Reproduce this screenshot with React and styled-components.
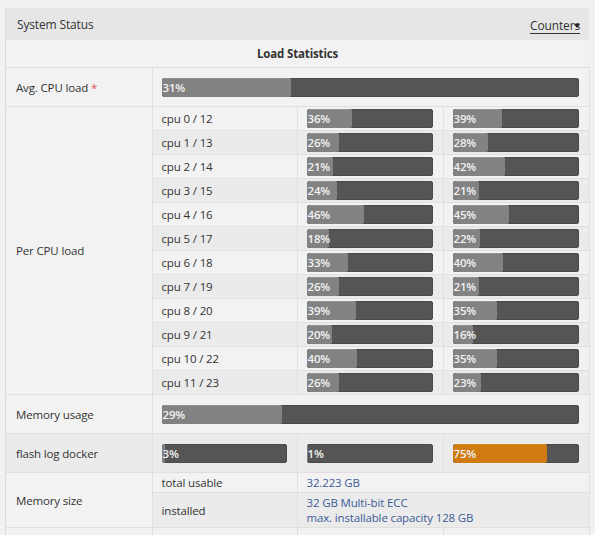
import styled, { createGlobalStyle } from 'styled-components'

const Global = createGlobalStyle`
    body {
        margin: 0;
        padding: 8px 6px 8px 5px;
        background: #f1f1f1;
        font-family: "Open Sans", "Liberation Sans", sans-serif;
        font-size: 11.5px;
        letter-spacing: -0.15px;
        color: #333;
    }
`

const perCpu = [
    ['cpu 0 / 12', 36, 39],
    ['cpu 1 / 13', 26, 28],
    ['cpu 2 / 14', 21, 42],
    ['cpu 3 / 15', 24, 21],
    ['cpu 4 / 16', 46, 45],
    ['cpu 5 / 17', 18, 22],
    ['cpu 6 / 18', 33, 40],
    ['cpu 7 / 19', 26, 21],
    ['cpu 8 / 20', 39, 35],
    ['cpu 9 / 21', 20, 16],
    ['cpu 10 / 22', 40, 35],
    ['cpu 11 / 23', 26, 23],
]

const Progress = ({ value, warn }) => (
    <Bar>
        <Fill $warn={warn} style={{ width: `${value}%` }} />
        <BarText>{value}%</BarText>
    </Bar>
)

const App = () => {
    return (
        <>
            <Global />
            <Panel>
                <Header>
                    <Title>System Status</Title>
                    <Counters>
                        Counters
                        <Caret />
                    </Counters>
                </Header>
                <Table>
                    <colgroup>
                        <col style={{ width: 146 }} />
                        <col style={{ width: 145 }} />
                        <col style={{ width: 146 }} />
                        <col style={{ width: 146 }} />
                    </colgroup>
                    <tbody>
                        <Row>
                            <Caption colSpan={4}>Load Statistics</Caption>
                        </Row>
                        <Row>
                            <Label $h={38}>Avg. CPU load <Star>*</Star></Label>
                            <Cell colSpan={3}><Progress value={31} /></Cell>
                        </Row>
                        {perCpu.map(([name, a, b], i) => (
                            <Row key={name} $alt={i % 2 === 1}>
                                {i === 0 && <Label $light rowSpan={12}>Per CPU load</Label>}
                                <Cell $h={23}>{name}</Cell>
                                <Cell><Progress value={a} /></Cell>
                                <Cell><Progress value={b} /></Cell>
                            </Row>
                        ))}
                        <Row>
                            <Label $h={38}>Memory usage</Label>
                            <Cell colSpan={3}><Progress value={29} /></Cell>
                        </Row>
                        <Row $alt>
                            <Label $h={38}>flash log docker</Label>
                            <Cell><Progress value={3} /></Cell>
                            <Cell><Progress value={1} /></Cell>
                            <Cell><Progress value={75} warn /></Cell>
                        </Row>
                        <Row>
                            <Label $light rowSpan={2}>Memory size</Label>
                            <Cell $h={19}>total usable</Cell>
                            <Cell colSpan={2}><Value>32.223 GB</Value></Cell>
                        </Row>
                        <Row $alt>
                            <Cell $h={34}>installed</Cell>
                            <Cell colSpan={2}>
                                <Value>32 GB Multi-bit ECC</Value>
                                <Value>max. installable capacity 128 GB</Value>
                            </Cell>
                        </Row>
                        <Row>
                            <Label $light rowSpan={2}></Label>
                            <Cell $h={20}>Data from</Cell>
                            <Cell><Value>Standard</Value></Cell>
                            <Cell><Value>Extended</Value></Cell>
                        </Row>
                    </tbody>
                </Table>
            </Panel>
        </>
    )
}

const Panel = styled.div`
    border-left: 1px solid #dcdcdc;
    width: 583px;
`
const Header = styled.div`
    display: flex;
    align-items: center;
    justify-content: space-between;
    height: 32px;
    padding: 0 9px 0 11px;
    background: #e6e6e6;
`
const Title = styled.span`
    font-size: 12px;
    color: #333;
`
const Counters = styled.a`
    position: relative;
    color: #333;
    font-size: 12px;
    padding-top: 2px;
    text-decoration: underline;
    text-underline-offset: 3px;
    cursor: pointer;
`
const Caret = styled.span`
    position: absolute;
    right: 0;
    top: 9px;
    width: 0;
    height: 0;
    border-left: 3px solid transparent;
    border-right: 3px solid transparent;
    border-top: 4px solid #222;
`
const Table = styled.table`
    width: 583px;
    table-layout: fixed;
    border-collapse: collapse;
`
const Row = styled.tr`
    background: ${p => (p.$alt ? '#ebebeb' : '#f2f2f2')};
`
const Caption = styled.td`
    height: 27px;
    padding: 0;
    text-align: center;
    font-weight: bold;
    border-bottom: 1px solid #e0e0e0;
`
const Label = styled.td`
    height: ${p => (p.$h ? `${p.$h}px` : 'auto')};
    padding: 0 10px;
    background: ${p => (p.$light ? '#f2f2f2' : 'inherit')};
    border-bottom: 1px solid #e0e0e0;
    border-right: 1px solid #e0e0e0;
    vertical-align: middle;
`
const Star = styled.span`
    color: #d9534f;
`
const Cell = styled.td`
    height: ${p => (p.$h ? `${p.$h}px` : 'auto')};
    padding: 0 10px 0 9px;
    border-bottom: 1px solid #e0e0e0;
    border-right: 1px solid #e0e0e0;
    vertical-align: middle;
    line-height: 15px;
`
const Value = styled.div`
    color: #3d5b97;
`
const Bar = styled.div`
    position: relative;
    height: 19px;
    border-radius: 3px;
    background: #555;
    box-shadow: inset 0 0 0 1px #4a4a4a;
    overflow: hidden;
`
const Fill = styled.div`
    height: 100%;
    background: ${p => (p.$warn ? '#cf7b12' : '#828282')};
    border-top: 1px solid ${p => (p.$warn ? '#d98a2a' : '#929292')};
    box-sizing: border-box;
    border-radius: 3px 2px 2px 3px;
`
const BarText = styled.span`
    position: absolute;
    left: 1px;
    top: 0;
    line-height: 19px;
    color: #f2f2f2;
    font-weight: 600;
    font-size: 11.5px;
`
export default App
